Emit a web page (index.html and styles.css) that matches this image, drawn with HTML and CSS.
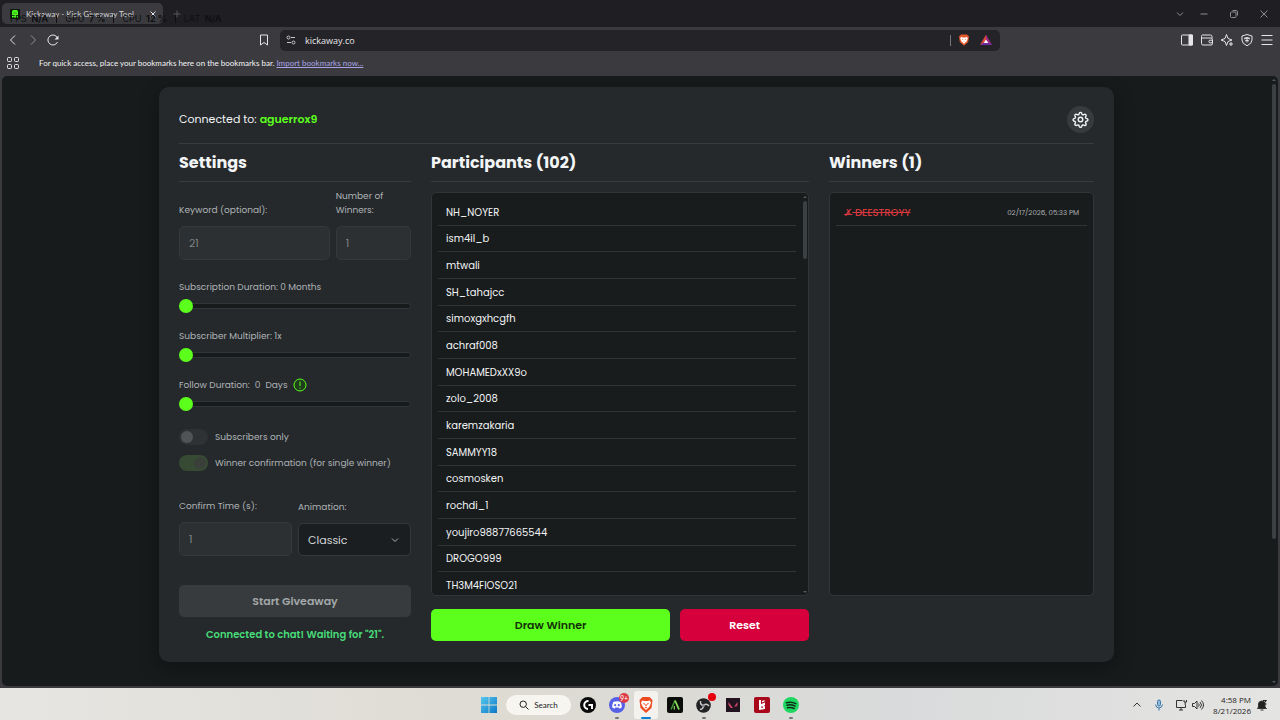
FILE: index.html
```html
<!DOCTYPE html>
<html lang="en">
<head>
    <meta charset="UTF-8">
    <meta name="viewport" content="width=device-width, initial-scale=1.0">
    <title>Kickaway - Kick Giveaway Tool</title>
    <link rel="stylesheet" href="styles.css">
</head>
<body>
    <!-- Tab strip -->
    <header class="tab-strip">
        <div class="tab">
            <svg class="favicon" viewBox="0 0 10 10"><rect width="10" height="10" rx="1" fill="#0a1a08"/><path d="M2 2.500Q2 1 3.500 1h3Q8 1 8 2.500V9L6.500 7.800 5 9 3.500 7.800 2 9z" fill="#4df51f"/><path d="M3.500 3.500h1v1h-1zM5.500 3.500h1v1h-1z" fill="#176b0c"/></svg>
            <span class="tab-title">Kickaway - Kick Giveaway Tool</span>
            <button class="tab-close" aria-label="Close tab">
                <svg viewBox="0 0 8 8"><path d="M1.500 1.500l5 5M6.500 1.500l-5 5"/></svg>
            </button>
        </div>
        <button class="tab-new" aria-label="New tab">
            <svg viewBox="0 0 8 8"><path d="M4 0.500v7M0.500 4h7"/></svg>
        </button>
        <div class="window-buttons">
            <button aria-label="Search tabs"><svg viewBox="0 0 10 10"><path d="M2 3.500l3 3 3-3"/></svg></button>
            <button aria-label="Minimize"><svg viewBox="0 0 10 10"><path d="M1.500 5h7"/></svg></button>
            <button aria-label="Restore"><svg viewBox="0 0 10 10"><rect x="1.500" y="3" width="5.500" height="5.500" rx="1"/><path d="M3.500 1.500H7Q8.500 1.500 8.500 3v3.500"/></svg></button>
            <button aria-label="Close"><svg viewBox="0 0 10 10"><path d="M1.500 1.500l7 7M8.500 1.500l-7 7"/></svg></button>
        </div>
        <div class="stats-overlay">
            <span>FPS <b>N/A</b></span><i></i><span>GPU <b>7 %</b></span><i></i><span>CPU <b>12 %</b></span><i></i><span>LAT <b>N/A</b></span>
        </div>
    </header>

    <!-- Toolbar -->
    <nav class="toolbar">
        <div class="nav-buttons">
            <button aria-label="Back"><svg viewBox="0 0 14 14"><path d="M9 2.500L4.500 7 9 11.500"/></svg></button>
            <button class="dim" aria-label="Forward"><svg viewBox="0 0 14 14"><path d="M5 2.500L9.500 7 5 11.500"/></svg></button>
            <button aria-label="Reload"><svg viewBox="0 0 14 14"><path d="M11.500 9A5 5 0 1 1 11.500 5"/><path d="M12.500 2.500v4h-4z" fill="#e6e6e8" stroke="none"/></svg></button>
            <button class="bookmark" aria-label="Bookmark this tab"><svg viewBox="0 0 14 14"><path d="M3.500 2h7v10L7 9.500 3.500 12z"/></svg></button>
        </div>
        <div class="address-bar">
            <svg class="site-info" viewBox="0 0 12 12"><circle cx="3.500" cy="3.500" r="1.500"/><path d="M6 3.500h4M2 8.500h4"/><circle cx="8.500" cy="8.500" r="1.500"/></svg>
            <input type="text" aria-label="Address" value="kickaway.co">
            <span class="divider"></span>
            <svg class="shield" viewBox="0 0 12 12"><path d="M3 0.500h6l2 2-.8 5.500L6 11.800 1.800 8 1 2.500z" fill="#e4572a"/><path d="M3 3l2 .5h2L9 3l.8 1.500-1.300 3L6 9.800 3.500 7.500 2.200 4.500z" fill="#fff"/><path d="M4 5h1.200L4.800 6zM8 5H6.800L7.200 6zM5.300 7.500h1.400L6 8.200z" fill="#e4572a"/></svg>
            <svg class="rewards" viewBox="0 0 12 12"><path d="M6 1L0 11h12z" fill="#6a2c9e"/><path d="M6 1L0 11l6-4z" fill="#e04a2f"/><path d="M6 1l6 10-6-4z" fill="#a0287f"/><path d="M6 5.500L3.700 9h4.600z" fill="#fff"/></svg>
        </div>
        <div class="tool-buttons">
            <button aria-label="Sidebar"><svg viewBox="0 0 14 14"><rect x="1.500" y="2" width="11" height="10" rx="1"/><path d="M9 2h3.500v10H9z" fill="#e6e6e8"/></svg></button>
            <button aria-label="Wallet"><svg viewBox="0 0 14 14"><path d="M12 5V3.500Q12 2 10.500 2h-8Q1.500 2 1.500 3.500v7Q1.500 12 3 12h8Q12.500 12 12.500 10.500V6.500Q12.500 5 11 5H2"/><path d="M12.500 7.200H9.500q-1.300 1.300 0 2.600h3z"/></svg></button>
            <button aria-label="Leo AI"><svg viewBox="0 0 14 14"><path d="M6.500 1.500L8 5.500l4 1.500-4 1.500-1.500 4L5 8.500 1 7l4-1.500z"/><path d="M11 9v4M9 11h4"/></svg></button>
            <button aria-label="VPN"><svg viewBox="0 0 14 14"><path d="M7 1.500l5 1.500v4q0 3.500-5 5.800Q2 10.500 2 7V3z"/><path d="M4 6q3-2.500 6 0M5 8q2-1.500 4 0M4.500 5h5M7 4v5.500"/></svg></button>
            <button aria-label="Menu"><svg viewBox="0 0 14 14"><path d="M1.500 2.500h11M1.500 7h11M1.500 11.500h11"/></svg></button>
        </div>
    </nav>

    <div class="bookmarks-bar">
        <button aria-label="Apps"><svg viewBox="0 0 14 14"><rect x="1.500" y="1.500" width="4" height="4" rx="1"/><rect x="8.500" y="1.500" width="4" height="4" rx="1"/><rect x="1.500" y="8.500" width="4" height="4" rx="1"/><rect x="8.500" y="8.500" width="4" height="4" rx="1"/></svg></button>
        <span>For quick access, place your bookmarks here on the bookmarks bar. <a href="#">Import bookmarks now...</a></span>
    </div>

    <!-- Page -->
    <div class="page">
        <main class="card">
            <div class="card-header">
                <span>Connected to: <strong>aguerrox9</strong></span>
                <button class="gear" aria-label="Settings">
                    <svg viewBox="0 0 24 24"><circle cx="12" cy="12" r="3.200"/><path d="M10.300 3.200a1.800 1.800 0 0 1 3.400 0l.3 1a1.800 1.800 0 0 0 2.500 1l1-.5a1.800 1.800 0 0 1 2.300 2.400l-.5.900a1.800 1.800 0 0 0 1 2.500l1 .3a1.800 1.800 0 0 1 0 3.400l-1 .3a1.800 1.800 0 0 0-1 2.500l.5 1a1.800 1.800 0 0 1-2.400 2.300l-.9-.5a1.800 1.800 0 0 0-2.500 1l-.3 1a1.800 1.800 0 0 1-3.400 0l-.3-1a1.800 1.800 0 0 0-2.500-1l-1 .5a1.800 1.800 0 0 1-2.300-2.400l.5-.9a1.800 1.800 0 0 0-1-2.500l-1-.3a1.800 1.800 0 0 1 0-3.400l1-.3a1.800 1.800 0 0 0 1-2.500l-.5-1a1.800 1.800 0 0 1 2.400-2.300l.9.500a1.800 1.800 0 0 0 2.500-1z"/></svg>
                </button>
            </div>

            <div class="columns">
                <section class="settings">
                    <h2>Settings</h2>
                    <div class="field-row top-fields">
                        <div class="field">
                            <label for="keyword">Keyword (optional):</label>
                            <input type="text" id="keyword" value="21" disabled>
                        </div>
                        <div class="field">
                            <label for="winner-count">Number of Winners:</label>
                            <input type="text" id="winner-count" value="1" disabled>
                        </div>
                    </div>

                    <div class="slider-group">
                        <label for="sub-duration">Subscription Duration: 0 Months</label>
                        <input type="range" id="sub-duration" min="0" max="12" value="0">
                    </div>
                    <div class="slider-group">
                        <label for="sub-multiplier">Subscriber Multiplier: 1x</label>
                        <input type="range" id="sub-multiplier" min="1" max="10" value="1">
                    </div>
                    <div class="slider-group">
                        <label for="follow-duration">Follow Duration: <span>0</span> <span>Days</span>
                            <svg viewBox="0 0 14 14"><circle cx="7" cy="7" r="6"/><path d="M7 3.500v4.500M7 9.500v1"/></svg>
                        </label>
                        <input type="range" id="follow-duration" min="0" max="30" value="0">
                    </div>

                    <div class="toggles">
                        <label><input type="checkbox" disabled>Subscribers only</label>
                        <label><input type="checkbox" checked disabled>Winner confirmation (for single winner)</label>
                    </div>

                    <div class="field-row bottom-fields">
                        <div class="field">
                            <label for="confirm-time">Confirm Time (s):</label>
                            <input type="text" id="confirm-time" value="1" disabled>
                        </div>
                        <div class="field">
                            <label for="animation">Animation:</label>
                            <div class="select-wrap">
                                <select id="animation"><option>Classic</option></select>
                                <svg viewBox="0 0 8 8"><path d="M1 2.500l3 3 3-3"/></svg>
                            </div>
                        </div>
                    </div>

                    <button class="btn btn-start" disabled>Start Giveaway</button>
                    <p class="status">Connected to chat! Waiting for "21".</p>
                </section>

                <section class="participants">
                    <h2>Participants (102)</h2>
                    <div class="list-box">
                        <ul class="participant-list">
                            <li>NH_NOYER</li>
                            <li>ism4il_b</li>
                            <li>mtwali</li>
                            <li>SH_tahajcc</li>
                            <li>simoxgxhcgfh</li>
                            <li>achraf008</li>
                            <li>MOHAMEDxXX9o</li>
                            <li>zolo_2008</li>
                            <li>karemzakaria</li>
                            <li>SAMMYY18</li>
                            <li>cosmosken</li>
                            <li>rochdi_1</li>
                            <li>youjiro98877665544</li>
                            <li>DROGO999</li>
                            <li>TH3M4FIOSO21</li>
                        </ul>
                        <div class="scrollbar list-scrollbar">
                            <svg viewBox="0 0 4 4"><path d="M2 1l2 2H0z"/></svg>
                            <div class="thumb"></div>
                            <svg viewBox="0 0 4 4"><path d="M2 3l2-2H0z"/></svg>
                        </div>
                    </div>
                    <div class="actions">
                        <button class="btn btn-draw">Draw Winner</button>
                        <button class="btn btn-reset">Reset</button>
                    </div>
                </section>

                <section class="winners">
                    <h2>Winners (1)</h2>
                    <div class="list-box">
                        <div class="winner">
                            <s><span class="cross">✗</span> DEESTROYY</s>
                            <time>02/17/2026, 05:33 PM</time>
                        </div>
                    </div>
                </section>
            </div>
        </main>
        <div class="scrollbar page-scrollbar">
            <svg viewBox="0 0 4 4"><path d="M2 1l2 2H0z"/></svg>
            <div class="thumb"></div>
            <svg viewBox="0 0 4 4"><path d="M2 3l2-2H0z"/></svg>
        </div>
    </div>

    <!-- Taskbar -->
    <footer class="taskbar">
        <div class="apps">
            <button class="app" aria-label="Start"><svg viewBox="0 0 16 16"><defs><linearGradient id="win" x2="1" y2="1"><stop stop-color="#55c8ee"/><stop offset="1" stop-color="#0a78c8"/></linearGradient></defs><path d="M0 0h7.600v7.600H0zM8.400 0H16v7.600H8.400zM0 8.400h7.600V16H0zM8.400 8.400H16V16H8.400z" fill="url(#win)"/></svg></button>
            <button class="search"><svg viewBox="0 0 10 10"><circle cx="4.200" cy="4.200" r="3.200"/><path d="M6.600 6.600L9.500 9.500"/></svg>Search</button>
            <button class="app" aria-label="Logitech G HUB"><svg viewBox="0 0 16 16"><circle cx="8" cy="8" r="8" fill="#0b0b0b"/><path d="M8.500 4A4 4 0 1 0 8 12M8.500 8H12v4" fill="none" stroke="#fff" stroke-width="2"/></svg></button>
            <button class="app open" aria-label="Discord"><svg viewBox="0 0 16 16"><circle cx="8" cy="8" r="8" fill="#5560e6"/><path d="M4.500 4.800Q8 3.600 11.500 4.800q1.500 2.500 1.400 5.400-1.400 1.300-2.700 1.400l-.6-1.100H6.400l-.6 1.100q-1.300-.1-2.700-1.400-.1-2.900 1.400-5.400z" fill="#fff"/><circle cx="6.200" cy="8.200" r="1.100" fill="#5560e6"/><circle cx="9.800" cy="8.200" r="1.100" fill="#5560e6"/></svg><span class="badge">9+</span></button>
            <button class="app active" aria-label="Brave"><svg viewBox="0 0 16 16"><path d="M4.500 0h7L14.500 3l-1 8L8 16 2.500 11l-1-8z" fill="#ee4a22"/><path d="M4 3.500l2.500.5h3l2.500-.5L13 6l-1.800 4L8 13 4.800 10 3 6z" fill="#fff"/><path d="M4.800 6l2.200.4-.6 1.600zM11.200 6L9 6.400l.6 1.600zM6.500 10h3L8 11.400zM7.600 7h.8l.4 2H7.200z" fill="#ee4a22"/></svg></button>
            <button class="app" aria-label="Aimlabs"><svg viewBox="0 0 16 16"><rect width="16" height="16" rx="2" fill="#0a0d0a"/><path d="M4 12.500L8 3.500" stroke="#3f8f3d" stroke-width="1.500"/><path d="M8 3.500l4 9" stroke="#8ade57" stroke-width="1.800"/><path d="M7.300 9v3.500" stroke="#8ade57" stroke-width="1.200"/></svg></button>
            <button class="app open" aria-label="OBS Studio"><svg viewBox="0 0 16 16"><circle cx="7.500" cy="8.500" r="7.300" fill="#222225"/><path d="M7.500 8.500Q4 8 4.500 4M7.500 8.500Q10.500 6 13 9M7.500 8.500Q7.500 12 4 12.500" fill="none" stroke="#c9c9cc" stroke-width="1.400"/><circle cx="7.500" cy="8.500" r="1.500" fill="#8c8c90"/></svg><span class="badge dot"></span></button>
            <button class="app" aria-label="Valorant"><svg viewBox="0 0 16 16"><rect x="1" y="1" width="14" height="14" fill="#21141f"/><path d="M3.500 5l4.500 6H5.800L3.500 8zM12.500 5v3l-1.200 1.600H9.200z" fill="#cf4969"/></svg></button>
            <button class="app" aria-label="Riot Client"><svg viewBox="0 0 16 16"><rect width="16" height="16" rx="2" fill="#a8081a"/><path d="M5 3h2v4l4-1.500V8l-1 .800 1 .700V12L5 13zM8 4l2.500-1v1.500L8 5.500z" fill="#fff"/><path d="M7.200 9.500h1.800v1.300H7.200z" fill="#a8081a"/></svg></button>
            <button class="app open" aria-label="Spotify"><svg viewBox="0 0 16 16"><circle cx="8" cy="8" r="8" fill="#1ed760"/><path d="M3.500 5.700q5-1.500 9.300 1M4 8.300q4.300-1.200 8 .900M4.500 10.800q3.600-1 6.700.700" fill="none" stroke="#102a18" stroke-width="1.500" stroke-linecap="round"/></svg></button>
        </div>
        <div class="tray">
            <svg viewBox="0 0 12 12"><path d="M2.500 7.500L6 4l3.500 3.500"/></svg>
            <svg class="mic" viewBox="0 0 12 12"><rect x="4.500" y="1" width="3" height="6" rx="1.500" fill="#8fb8dc"/><path d="M2.500 5.500Q3 9 6 9t3.500-3.500M6 9v2.500"/></svg>
            <svg viewBox="0 0 12 12"><path d="M7.500 1.500h-6v7h9V6M4 11h4M6 8.500V11"/><path d="M9 1v2h2.500V1M10.200 3v3"/></svg>
            <svg viewBox="0 0 12 12"><path d="M.5 4.500h2L5 2v8L2.500 7.500h-2zM6.500 4.500q1.500 1.500 0 3M8 3q3 3 0 6M9.500 1.500q4 4.500 0 9"/></svg>
            <div class="clock"><span>4:58 PM</span><span>8/21/2026</span></div>
            <svg viewBox="0 0 12 12"><path d="M2.500 8V4.500Q3 2 6 2t3 2.500V8l1.500 1.500h-9zM4.500 11h3" fill="#222"/><path d="M7 1.500h3.500L7.500 5h3" stroke="#222"/></svg>
        </div>
    </footer>
</body>
</html>
```

FILE: styles.css
```css
* {
    box-sizing: border-box;
}
body {
    margin: 0;
    min-height: 100vh;
    display: flex;
    flex-direction: column;
    background: #3b3b3f;
    color: #f2f4f5;
    font-family: Lato, "Open Sans", sans-serif;
    font-size: 8px;
}
button {
    border: none;
    padding: 0;
    background: none;
    color: inherit;
    font: inherit;
    display: flex;
    align-items: center;
    justify-content: center;
    cursor: pointer;
}
svg {
    display: block;
    flex: none;
    fill: none;
    stroke: none;
}

/* Browser */
.tab-strip {
    position: relative;
    display: flex;
    align-items: center;
    height: 27px;
    padding-left: 2px;
    background: #1f1e23;
}
.tab-strip button svg {
    stroke: #8c8c92;
    width: 8px;
    height: 8px;
}
.tab {
    display: flex;
    align-items: center;
    gap: 6px;
    width: 161px;
    height: 21px;
    padding: 0 6px 0 8px;
    border-radius: 5px;
    background: #3b3b3f;
}
.favicon {
    width: 10px;
    height: 10px;
}
.tab-title {
    flex: 1;
    color: #d4d4d7;
    white-space: nowrap;
}
.tab .tab-close svg {
    stroke: #e6e6e8;
}
.tab-new {
    margin-left: 10px;
}
.tab-strip .tab-new svg {
    stroke: #55555a;
}
.window-buttons {
    display: flex;
    gap: 20px;
    margin-left: auto;
    padding-right: 11px;
}
.window-buttons button:first-child {
    margin-right: -6px;
}
.tab-strip .window-buttons svg {
    width: 10px;
    height: 10px;
}
.stats-overlay {
    position: absolute;
    left: 10px;
    top: 13px;
    display: flex;
    align-items: center;
    gap: 8px;
    color: #101013;
    font-family: Inter, sans-serif;
    font-size: 9px;
    line-height: 12px;
    white-space: nowrap;
    pointer-events: none;
}
.stats-overlay b {
    margin-left: 2px;
}
.stats-overlay i {
    width: 1px;
    height: 8px;
    background: #101013;
}
.toolbar {
    display: grid;
    grid-template-columns: 1fr minmax(0, 720px) 1fr;
    align-items: center;
    height: 26px;
}
.toolbar button svg,
.bookmarks-bar button svg {
    width: 14px;
    height: 14px;
    stroke: #e6e6e8;
}
.nav-buttons {
    display: flex;
    gap: 6px;
    padding: 0 9px 0 6px;
}
.nav-buttons .dim {
    opacity: 0.5;
}
.nav-buttons .bookmark {
    margin-left: auto;
}
.address-bar {
    display: flex;
    align-items: center;
    height: 21px;
    padding: 0 8px 0 5px;
    border-radius: 5px;
    background: #242328;
}
.site-info {
    width: 12px;
    height: 12px;
    stroke: #c8c8cc;
}
.address-bar input {
    flex: 1;
    min-width: 0;
    padding: 0 8px;
    border: none;
    outline: none;
    background: none;
    color: #e6e6e8;
    font-family: "Open Sans", sans-serif;
    font-size: 9px;
}
.divider {
    width: 1px;
    height: 11px;
    background: #77777c;
}
.shield,
.rewards {
    width: 12px;
    height: 12px;
    margin-left: 7px;
}
.rewards {
    margin-left: 10px;
}
.tool-buttons {
    display: flex;
    justify-content: flex-end;
    gap: 6px;
    padding-right: 6px;
}
.bookmarks-bar {
    display: flex;
    align-items: center;
    gap: 19px;
    height: 23px;
    padding: 0 6px 3px;
}
.bookmarks-bar a {
    color: #a9a4e6;
}

/* Page */
.page {
    position: relative;
    flex: 1;
    margin: 0 2px 2px;
    padding: 11px 7px 24px 0;
    border-radius: 5px;
    background: #171b1c;
    font-family: Poppins, Inter, sans-serif;
}
.scrollbar {
    position: absolute;
    display: flex;
    flex-direction: column;
    gap: 2px;
    width: 4px;
}
.scrollbar svg {
    width: 4px;
    height: 4px;
    fill: #55595b;
}
.scrollbar .thumb {
    border-radius: 2px;
    background: #3b4042;
}
.scrollbar svg:last-child {
    margin-top: auto;
}
.page-scrollbar {
    top: 2px;
    bottom: 2px;
    right: 2px;
}
.page-scrollbar .thumb {
    height: 75%;
}
.card {
    max-width: 955px;
    margin: 0 auto;
    padding: 8px 20px 19px;
    border-radius: 10px;
    background: #25292c;
    box-shadow: 0 6px 20px rgba(0, 0, 0, 0.3);
}
.card-header {
    display: flex;
    align-items: center;
    justify-content: space-between;
    height: 49px;
    border-bottom: 1px solid #373c3f;
    font-size: 11px;
}
.card-header strong {
    color: #5cff1c;
    font-weight: 600;
}
.gear {
    width: 27px;
    height: 27px;
    border-radius: 50%;
    background: #373b3d;
}
.gear svg {
    width: 17px;
    height: 17px;
    stroke: #f2f4f5;
    stroke-width: 2;
}
.columns {
    display: grid;
    grid-template-columns: 232fr 378fr 265fr;
    gap: 20px;
}
h2 {
    margin: 0;
    height: 38px;
    border-bottom: 1px solid #373c3f;
    font-size: 16px;
    font-weight: 700;
    line-height: 38px;
}
.settings {
    color: #aeb3b6;
}
.settings h2 {
    color: #f2f4f5;
}
.settings label {
    font-size: 9px;
    line-height: 14px;
}
.field-row {
    display: grid;
    gap: 6px;
}
.top-fields {
    grid-template-columns: 2fr 1fr;
    align-items: end;
    margin-top: 7px;
}
.bottom-fields {
    grid-template-columns: 1fr 1fr;
    align-items: end;
    margin-top: 28px;
}
.field label {
    display: block;
    margin-bottom: 9px;
}
.field input,
.field select {
    display: block;
    width: 100%;
    height: 34px;
    padding: 0 9px;
    border: 1px solid #33383a;
    border-radius: 5px;
    background: #2c3032;
    color: #7d8284;
    font-family: inherit;
    font-size: 11px;
}
.field select {
    appearance: none;
    height: 33px;
    background: #1b1e21;
    color: #d3d6d8;
}
.select-wrap {
    position: relative;
}
.select-wrap svg {
    position: absolute;
    top: 13px;
    right: 12px;
    width: 8px;
    height: 8px;
    stroke: #aeb3b6;
    pointer-events: none;
}
.slider-group {
    margin-top: 20px;
}
.slider-group + .slider-group {
    margin-top: 16px;
}
.slider-group label {
    display: flex;
    align-items: center;
    gap: 5px;
}
.slider-group svg {
    width: 14px;
    height: 14px;
    stroke: #5cff1c;
    fill: #1f3d1c;
}
.slider-group input {
    appearance: none;
    display: block;
    width: 100%;
    height: 14px;
    margin: 5px 0 0;
    background: none;
}
.slider-group input::-webkit-slider-runnable-track {
    height: 6px;
    border: 1px solid #303537;
    border-radius: 3px;
    background: #171b1c;
}
.slider-group input::-webkit-slider-thumb {
    appearance: none;
    width: 14px;
    height: 14px;
    margin-top: -5px;
    margin-left: -1px;
    border-radius: 50%;
    background: #5cff1c;
}
.toggles {
    display: flex;
    flex-direction: column;
    gap: 10px;
    margin-top: 18px;
}
.toggles label {
    display: flex;
    align-items: center;
    gap: 7px;
}
.toggles input {
    appearance: none;
    display: flex;
    width: 29px;
    height: 16px;
    margin: 0;
    padding: 2px;
    border-radius: 8px;
    background: #2e3234;
}
.toggles input::before {
    content: "";
    width: 12px;
    height: 12px;
    border-radius: 50%;
    background: #505456;
}
.toggles input:checked {
    justify-content: flex-end;
    background: #364a34;
}
.toggles input:checked::before {
    background: #3a4039;
}
.btn {
    height: 32px;
    border-radius: 5px;
    font-size: 11px;
    font-weight: 600;
}
.btn-start {
    width: 100%;
    margin-top: 29px;
    background: #373b3d;
    color: #a3a7a9;
}
.status {
    margin: 9px 0 0;
    color: #48dc79;
    font-size: 10px;
    font-weight: 600;
    line-height: 17px;
    text-align: center;
}
.list-box {
    position: relative;
    height: 404px;
    margin-top: 10px;
    padding: 6px;
    border: 1px solid #303537;
    border-radius: 5px;
    background: #191c1d;
    overflow: hidden;
}
.participant-list {
    display: grid;
    grid-template-rows: repeat(15, 1fr);
    height: 400px;
    margin: 0 6px 0 0;
    padding: 0;
    list-style: none;
    font-size: 10px;
}
.participant-list li {
    display: flex;
    align-items: center;
    padding: 2px 8px 0;
    border-bottom: 1px solid #303537;
}
.list-scrollbar {
    top: 2px;
    right: 1px;
    bottom: 1px;
}
.list-scrollbar .thumb {
    height: 58px;
}
.actions {
    display: grid;
    grid-template-columns: 240fr 129fr;
    gap: 10px;
    margin-top: 13px;
}
.btn-draw {
    background: #5cff1c;
    color: #123108;
}
.btn-reset {
    background: #d6003c;
    color: #fff;
}
.winner {
    display: flex;
    align-items: center;
    justify-content: space-between;
    height: 27px;
    padding: 2px 8px 0;
    border-bottom: 1px solid #303537;
}
.winner s {
    color: #d8383d;
    font-size: 10px;
    font-weight: 500;
    line-height: 16px;
}
.winner .cross {
    font-family: "DejaVu Sans", sans-serif;
}
.winner time {
    color: #aeb3b6;
    font-size: 7px;
}

/* Taskbar */
.taskbar {
    display: grid;
    grid-template-columns: 1fr auto 1fr;
    align-items: center;
    height: 33px;
    background: linear-gradient(90deg, #e6e5e2, #dddbd2 40%, #d9dadb 70%, #e4e4e2);
    color: #222;
}
.apps {
    grid-column: 2;
    display: flex;
    align-items: center;
    gap: 5px;
}
.app {
    position: relative;
    width: 24px;
    height: 28px;
    border-radius: 3px;
}
.app svg {
    width: 16px;
    height: 16px;
}
.app.active {
    background: #f3f2ef;
}
.app.open::after,
.app.active::after {
    content: "";
    position: absolute;
    bottom: 0;
    width: 4px;
    height: 2px;
    border-radius: 1px;
    background: #77777a;
}
.app.active::after {
    width: 10px;
    background: #0b7fd0;
}
.badge {
    position: absolute;
    top: 2px;
    right: 0;
    width: 10px;
    height: 10px;
    border-radius: 5px;
    background: #dc3b45;
    color: #fff;
    font-size: 7px;
    line-height: 10px;
}
.badge.dot {
    width: 8px;
    height: 8px;
    background: #e8000c;
}
.search {
    gap: 5px;
    width: 65px;
    height: 20px;
    border-radius: 10px;
    background: #f6f5f0;
}
.search svg {
    width: 10px;
    height: 10px;
    stroke: #222;
}
.tray {
    grid-column: 3;
    display: flex;
    align-items: center;
    justify-content: flex-end;
    gap: 5px;
    padding-right: 12px;
}
.tray svg {
    width: 12px;
    height: 12px;
    stroke: #333;
}
.tray .mic {
    margin: 0 5px;
    stroke: #3a76ac;
}
.clock {
    display: flex;
    flex-direction: column;
    margin-left: 4px;
    font-family: "Open Sans", sans-serif;
    font-size: 8px;
    line-height: 11px;
    text-align: right;
}
```
